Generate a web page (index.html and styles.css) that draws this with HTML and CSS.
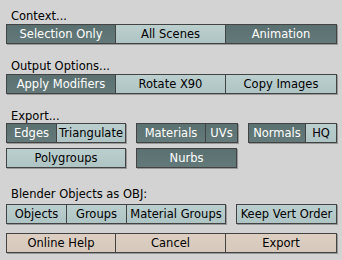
FILE: index.html
```html
<!DOCTYPE html>
<html lang="en">
<head>
    <meta charset="UTF-8">
    <title>OBJ Export</title>
    <link rel="stylesheet" href="styles.css">
</head>
<body>
    <div class="panel">
        <div class="label">Context...</div>
        <div class="row">
            <div class="group">
                <span class="btn on w110">Selection Only</span>
                <span class="btn w110">All Scenes</span>
                <span class="btn on w111">Animation</span>
            </div>
        </div>

        <div class="label">Output Options...</div>
        <div class="row">
            <div class="group">
                <span class="btn on w110">Apply Modifiers</span>
                <span class="btn w110">Rotate X90</span>
                <span class="btn w111">Copy Images</span>
            </div>
        </div>

        <div class="label label-export">Export...</div>
        <div class="row">
            <div class="group">
                <span class="btn on w51">Edges</span>
                <span class="btn w69">Triangulate</span>
            </div>
            <div class="group">
                <span class="btn on w70">Materials</span>
                <span class="btn on w32">UVs</span>
            </div>
            <div class="group">
                <span class="btn on w58">Normals</span>
                <span class="btn w31">HQ</span>
            </div>
        </div>
        <div class="row row-tight">
            <div class="group">
                <span class="btn w120">Polygroups</span>
            </div>
            <div class="group">
                <span class="btn on w101">Nurbs</span>
            </div>
        </div>

        <div class="label label-wide">Blender Objects as OBJ:</div>
        <div class="row">
            <div class="group">
                <span class="btn w61">Objects</span>
                <span class="btn w60">Groups</span>
                <span class="btn w99">Material Groups</span>
            </div>
            <div class="group">
                <span class="btn w101">Keep Vert Order</span>
            </div>
        </div>

        <div class="row row-actions">
            <div class="group">
                <span class="btn action w110">Online Help</span>
                <span class="btn action w110">Cancel</span>
                <span class="btn action w111">Export</span>
            </div>
        </div>
    </div>
</body>
</html>
```

FILE: styles.css
```css
:root {
    --bg: #d3d3d3;
    --edge: #434343;
    --dark: #5e7474;
    --light: #b5c9c9;
    --beige: #d9cbbd;
}

* {
    margin: 0;
    padding: 0;
    box-sizing: border-box;
}

body {
    background-color: var(--bg);
    font-family: "DejaVu Sans", "Liberation Sans", sans-serif;
    font-size: 11.5px;
    color: #000;
}

.panel {
    width: 342px;
    height: 260px;
    padding: 10px 0 0 6px;
}

.label {
    height: 12px;
    line-height: 12px;
    padding-left: 5px;
    margin-top: 16px;
    margin-bottom: 2px;
}

.label:first-child {
    margin-top: 0;
}

.label-export {
    margin-bottom: 1px;
}

.label-wide {
    margin-top: 20px;
    margin-bottom: 4px;
}

.row {
    display: flex;
    gap: 10px;
}

.row-tight {
    margin-top: 5px;
}

.row-actions {
    margin-top: 9px;
}

.group {
    display: flex;
    box-shadow: 1px 1px 0 rgba(0, 0, 0, 0.28);
}

.btn {
    display: block;
    height: 20px;
    line-height: 18px;
    text-align: center;
    white-space: nowrap;
    border: 1px solid var(--edge);
    border-left: none;
    background: linear-gradient(#bccfcf, #afc4c4);
    color: #000;
}

.btn:first-child {
    border-left: 1px solid var(--edge);
}

.btn.on {
    background: linear-gradient(#5b7070, #647a7a);
    color: #fff;
}

.btn.action {
    background: linear-gradient(#ddd0c3, #d6c8ba);
}

.w31 { width: 31px; }
.w32 { width: 32px; }
.w51 { width: 51px; }
.w58 { width: 58px; }
.w60 { width: 60px; }
.w61 { width: 61px; }
.w69 { width: 69px; }
.w70 { width: 70px; }
.w99 { width: 99px; }
.w101 { width: 101px; }
.w110 { width: 110px; }
.w111 { width: 111px; }
.w120 { width: 120px; }
```
